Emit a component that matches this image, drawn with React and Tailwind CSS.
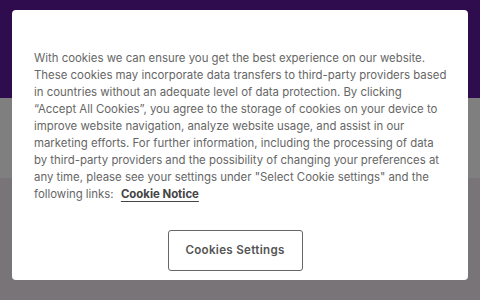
export default function App() {
  return (
    <div className="relative w-[480px] h-[300px] overflow-hidden" style={{ fontFamily: "Inter, 'Noto Sans', sans-serif" }}>
      <div className="h-[98px] bg-[#2e0c4e]" />
      <div className="h-[80px] bg-[#7f7f7f]" />
      <div className="h-[122px] bg-[#787478]" />
      <div className="absolute left-[12px] top-[10px] w-[456px] h-[270px] bg-white rounded-[4px] pt-[40px] pl-[22px] pr-[10px] flex flex-col">
        <p className="text-[11.4px] leading-[17px] text-[#666] whitespace-nowrap">
          With cookies we can ensure you get the best experience on our website.<br />
          These cookies may incorporate data transfers to third-party providers based<br />
          in countries without an adequate level of data protection. By clicking<br />
          “Accept All Cookies”, you agree to the storage of cookies on your device to<br />
          improve website navigation, analyze website usage, and assist in our<br />
          marketing efforts. For further information, including the processing of data<br />
          by third-party providers and the possibility of changing your preferences at<br />
          any time, please see your settings under "Select Cookie settings" and the<br />
          following links:{" "}
          <a className="ml-[4px] font-bold text-[#444] underline underline-offset-[3px]">Cookie Notice</a>
        </p>
        <div className="flex justify-center mt-[27px] pr-[22px]">
          <button className="w-[135px] h-[41px] border border-[#666] rounded-[3px] text-[11.6px] font-semibold text-[#555] tracking-[0.3px]">
            Cookies Settings
          </button>
        </div>
      </div>
    </div>
  );
}
